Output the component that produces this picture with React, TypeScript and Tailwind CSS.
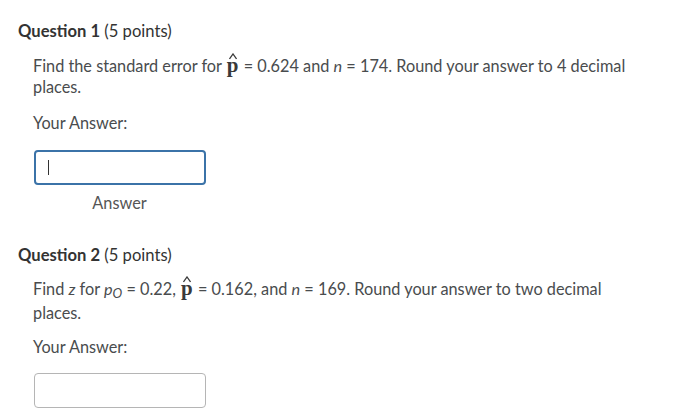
function PHat() {
  return (
    <span className="relative inline-block px-[1px] leading-[14px]" style={{ fontFamily: '"Liberation Serif", "DejaVu Serif", serif' }}>
      <span className="text-[21px] font-bold text-[#3a3a3a]">p</span>
      <svg className="absolute left-[3px] top-[-5px]" width="8" height="7" viewBox="0 0 8 7">
        <path d="M0.5 6 L4 1 L7.5 6" fill="none" stroke="#3a3a3a" strokeWidth="1.3" />
      </svg>
    </span>
  );
}

function AnswerBox({ focused }: { focused?: boolean }) {
  return (
    <div
      className={
        focused
          ? 'w-[172px] h-[35px] rounded-[4px] border-2 border-[#3b73a8] flex items-center pl-[12px]'
          : 'w-[172px] h-[35px] rounded-[4px] border border-[#b5b5b5] flex items-center pl-[12px]'
      }
    >
      {focused && <span className="block w-[1px] h-[15px] bg-[#333]" />}
    </div>
  );
}

export default function App() {
  return (
    <div className="w-[700px] h-[420px] bg-white overflow-hidden text-[#494c4e]" style={{ fontFamily: 'Lato, "Open Sans", sans-serif' }}>
      <div className="pt-[19px] pl-[18px]">
        <h2 className="text-[16.6px] leading-[24px] text-[#333]">
          <span className="font-bold">Question 1</span> (5 points)
        </h2>
        <div className="pl-[15px] w-[622px]">
          <p className="mt-[12px] text-[16.3px] leading-[21px]">
            Find the standard error for <PHat /> = 0.624 and <i>n</i> = 174. Round your answer to 4 decimal places.
          </p>
          <p className="mt-[15px] text-[16.3px] leading-[21px]">Your Answer:</p>
          <div className="mt-[17px] w-[172px] pl-[1px]">
            <AnswerBox focused />
            <div className="text-center text-[16.3px] leading-[21px] mt-[7px] text-[#555]">Answer</div>
          </div>
        </div>

        <h2 className="mt-[30px] text-[16.6px] leading-[24px] text-[#333]">
          <span className="font-bold">Question 2</span> (5 points)
        </h2>
        <div className="pl-[15px] w-[622px]">
          <p className="mt-[10px] text-[16.3px] leading-[24px]">
            Find <i>z</i> for <i>p</i>
            <sub className="text-[13px] italic leading-none">O</sub> = 0.22, <PHat /> = 0.162, and <i>n</i> = 169. Round your answer to two decimal places.
          </p>
          <p className="mt-[11px] text-[16.3px] leading-[21px]">Your Answer:</p>
          <div className="mt-[16px] w-[172px] pl-[1px]">
            <AnswerBox />
          </div>
        </div>
      </div>
    </div>
  );
}
